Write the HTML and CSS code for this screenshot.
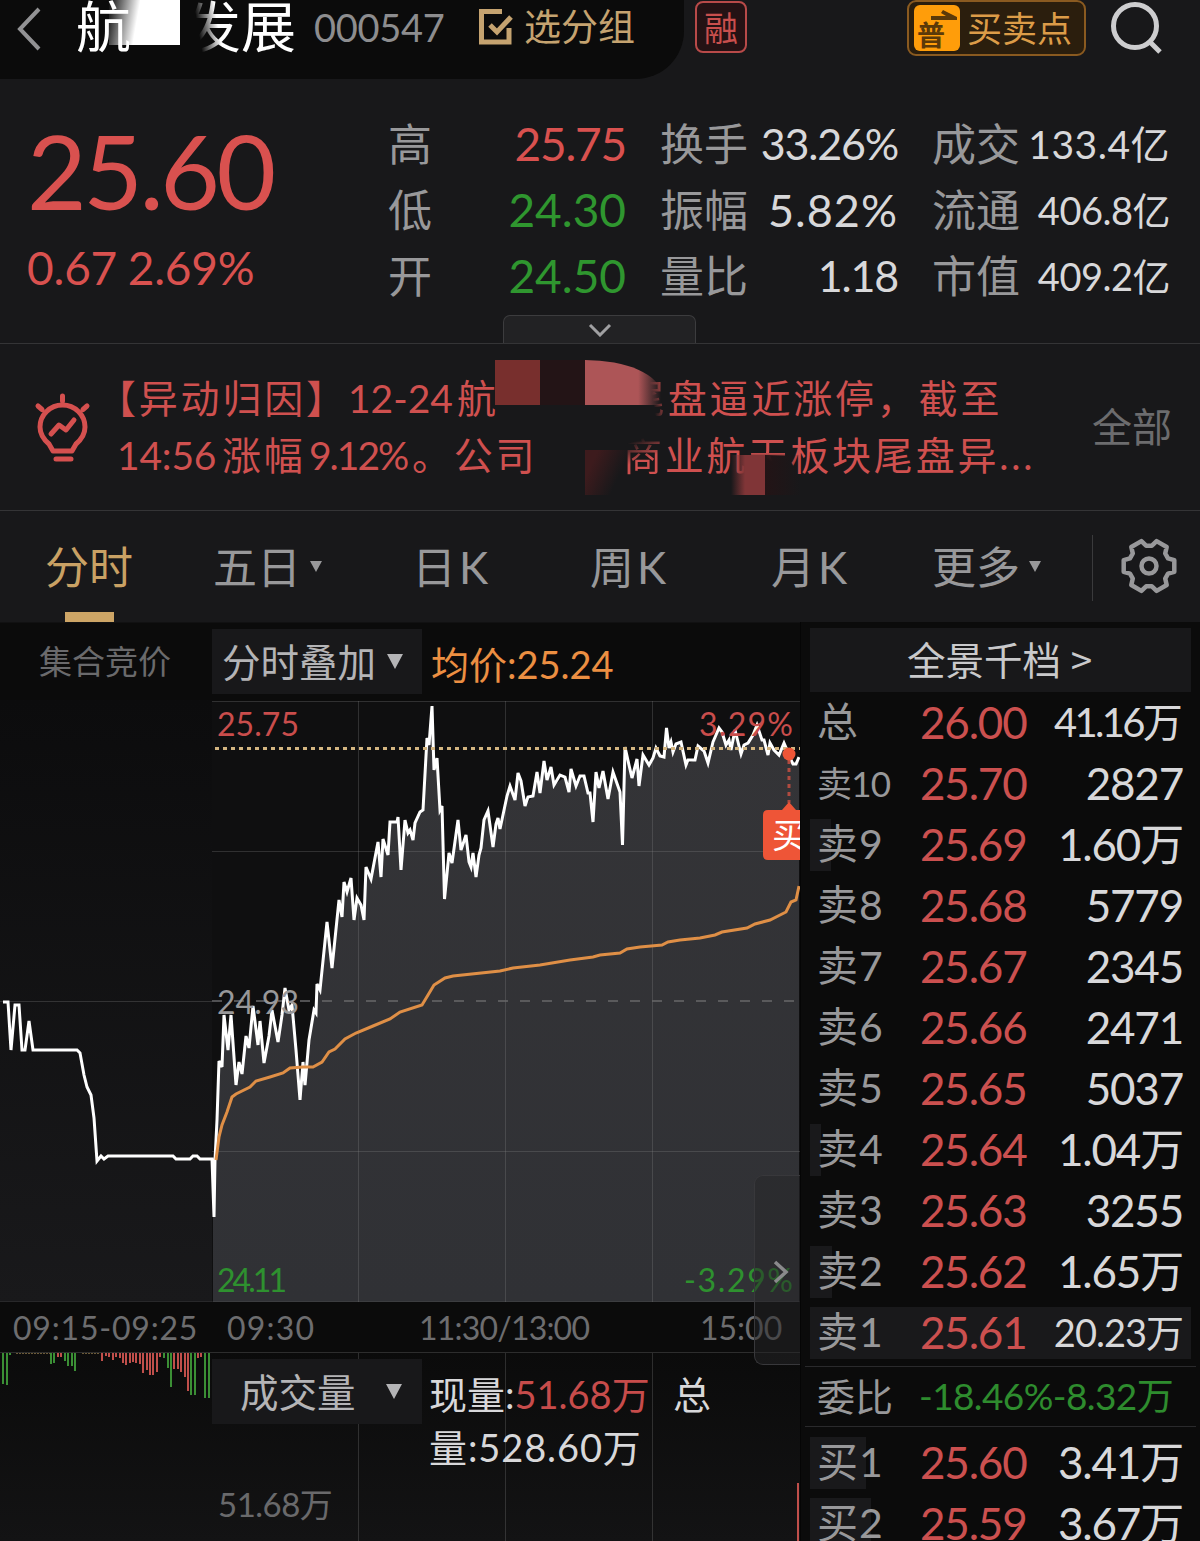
FILE: index.html
```html
<!DOCTYPE html>
<html lang="zh-CN">
<head>
    <meta charset="UTF-8">
    <meta name="viewport" content="width=device-width, initial-scale=1.0">
    <title>000547 分时</title>
    <link rel="stylesheet" href="styles.css">
</head>
<body>
    <header class="header">
        <div class="stock">
            <svg class="back" width="26" height="46" viewBox="0 0 26 46"><path d="M23 3L4 23L23 43"/></svg>
            <h1 class="stock-name">航<span class="name-mask"></span><span class="name-fade">发</span>展</h1>
            <span class="stock-code">000547</span>
            <svg class="check" width="36" height="38" viewBox="0 0 36 38"><path d="M24 3.500H3.500V34H31V20M12 17L19 24L33 9"/></svg>
            <span class="group">选分组</span>
        </div>
        <span class="margin-tag">融</span>
        <div class="trade-point">
            <span class="trade-icon">
                <svg width="46" height="18" viewBox="0 0 46 18"><path d="M17 11H32L27 8L29 5L43 12V15H17Z"/></svg>
                普
            </span>
            买卖点
        </div>
        <svg class="search" width="54" height="54" viewBox="0 0 54 54"><circle cx="25" cy="25" r="21.500"/><path d="M39 40L50 51"/></svg>
    </header>

    <section class="quote">
        <div class="price">
            <div class="price-now">25.60</div>
            <div class="price-change">0.67 2.69%</div>
        </div>
        <dl class="stats stats-price">
            <dt>高</dt><dd class="red">25.75</dd>
            <dt>低</dt><dd class="green">24.30</dd>
            <dt>开</dt><dd class="green">24.50</dd>
        </dl>
        <dl class="stats stats-rate">
            <dt>换手</dt><dd>33.26%</dd>
            <dt>振幅</dt><dd class="wide">5.82%</dd>
            <dt>量比</dt><dd>1.18</dd>
        </dl>
        <dl class="stats stats-total">
            <dt>成交</dt><dd class="wide">133.4亿</dd>
            <dt>流通</dt><dd>406.8亿</dd>
            <dt>市值</dt><dd>409.2亿</dd>
        </dl>
        <div class="expand">
            <svg width="24" height="14" viewBox="0 0 24 14"><path d="M2 2L12 12L22 2"/></svg>
        </div>
    </section>

    <section class="news">
        <svg class="bulb" width="58" height="70" viewBox="0 0 58 70">
            <path d="M28.500 3V8M4 13L8 16.500M53 13L49 16.500M19 58L15 51C8 45 6 39 6 34A22.500 22 0 0 1 51 34C51 39 49 45 42 51L38 58ZM17 41L25 32L32 37L40 27M22 66H37"/>
        </svg>
        <div class="news-text">
            <p><span class="seg seg-tag">【异动归因】</span><span class="seg seg-date">12-24</span><span class="seg seg-head">航</span><span class="fade-left">尾</span><span>盘逼近涨停，截至</span></p>
            <p><span class="seg seg-time">14:56</span><span class="seg seg-rise">涨幅</span><span class="seg seg-pct">9.12%</span><span class="seg seg-corp">。公司</span><span class="fade-corner">商</span><span>业航</span><span class="fade-down">天</span><span>板块尾盘异...</span></p>
            <i class="smudge smudge-a"></i>
            <i class="smudge smudge-b"></i>
            <i class="smudge smudge-c"></i>
            <i class="smudge smudge-d"></i>
            <i class="smudge smudge-e"></i>
        </div>
        <a class="news-all">全部</a>
    </section>

    <nav class="tabs">
        <span class="tab active">分时</span>
        <span class="tab tab-five">五日<i class="caret"></i></span>
        <span class="tab tab-day">日K</span>
        <span class="tab tab-week">周K</span>
        <span class="tab tab-month">月K</span>
        <span class="tab tab-more">更多<i class="caret"></i></span>
        <span class="settings">
            <svg width="56" height="56" viewBox="0 0 56 56">
                <path d="M30.900 7.700L35.600 3.100L45.700 9L44.200 15.400L47 20.300L53.300 22.200V33.800L47 35.700L44.200 40.600L45.700 47L35.600 52.900L30.900 48.300H25.100L20.400 52.900L10.300 47L11.800 40.600L9 35.700L2.700 33.800V22.200L9 20.300L11.800 15.400L10.300 9L20.400 3.100L25.100 7.700Z"/>
                <circle cx="28" cy="28" r="7.500"/>
            </svg>
        </span>
    </nav>

    <main class="board">
        <div class="charts">
            <div class="chart-bar">
                <span class="auction">集合竞价</span>
                <span class="select">分时叠加<i class="caret big"></i></span>
                <span class="average">均价:25.24</span>
            </div>

            <svg class="trend" width="800" height="602" viewBox="0 700 800 602">
                <defs>
                    <linearGradient id="auctionBg" x1="0" y1="0" x2="0" y2="1">
                        <stop offset="0" stop-color="#0c0c0d"/>
                        <stop offset="1" stop-color="#19191b"/>
                    </linearGradient>
                    <linearGradient id="trendFill" x1="0" y1="0" x2="0" y2="1">
                        <stop offset="0" stop-color="#343437"/>
                        <stop offset="1" stop-color="#303135"/>
                    </linearGradient>
                </defs>
                <rect x="0" y="700" width="212" height="602" fill="url(#auctionBg)"/>
                <rect x="212" y="701" width="588" height="601" fill="#0f0f10"/>
                <path fill="url(#trendFill)" d="M213 1302V1160L214 1217L215 1160L217 1120L219 1061L222 1067L224 1015L228 1050L231 1015L236 1085L239 1062L242 1074L246 1036L249 1048L253 1006L258 1045L260 1021L264 1063L269 1036L272 1010L278 1042L282 1015L285 988L289 1010L292 1005L296 1050L300 1100L303 1062L305 1085L309 1040L314 1010L317 984L320 990L327 922L332 968L339 900L342 917L344 882L347 892L351 878L354 920L357 898L361 905L364 920L366 867L371 879L378 842L381 877L383 839L388 855L390 822L397 822L398 817L401 870L405 820L408 833L413 840L415 823L420 812L423 810L427 738L429 745L432 706L434 770L437 758L440 810L442 806L444 899L449 853L452 863L458 820L461 850L466 835L469 862L473 853L476 877L481 848L484 820L488 811L493 847L498 818L500 829L507 796L510 786L515 800L518 773L525 806L533 796L537 772L540 793L544 761L547 780L551 767L554 785L565 777L569 792L571 769L576 786L584 776L588 793L590 793L593 822L596 772L599 788L603 771L608 799L613 772L620 792L622 845L625 747L632 778L637 759L639 786L643 755L649 765L656 748L664 757L666 728L669 748L673 752L681 742L686 765L695 760L698 746L704 751L708 763L719 728L726 745L731 750L735 730L741 754L757 725L768 755L770 743L779 755L784 743L793 764L799 757V1302Z"/>
                <path class="grid" d="M212 701.500H800M358.500 701V1302M505.500 701V1302M652.500 701V1302M212 851.500H800M212 1151.500H800M0 1001.500H212M0 1302H800"/>
                <path class="middle" d="M212 1001H796"/>
                <path class="line" d="M3 1002H8L11 1050L15 1005H19L22 1050H25L29 1021L33 1050H77L80 1053L84 1075L87 1087L91 1095L94 1118L97 1161L101 1156L104 1159L108 1156H173L176 1159H190L193 1156H197L200 1159H212L214 1217L215 1160L217 1120L219 1061L222 1067L224 1015L228 1050L231 1015L236 1085L239 1062L242 1074L246 1036L249 1048L253 1006L258 1045L260 1021L264 1063L269 1036L272 1010L278 1042L282 1015L285 988L289 1010L292 1005L296 1050L300 1100L303 1062L305 1085L309 1040L314 1010L316 1013L317 984L320 990L327 922L332 968L339 900L342 917L344 882L347 892L351 878L354 920L357 898L361 905L364 920L366 867L371 879L378 842L381 877L383 839L388 855L390 822L397 822L398 817L401 870L405 820L408 833L410 830L413 840L415 823L420 812L423 810L427 738L429 745L432 706L434 770L437 758L440 810L442 806L444.500 899L449 853L452 863L458 820L461 850L466 835L469 862L471 867L473 853L476 877L479 855L481 848L484 820L488 811L493 847L496 824L498 818L500 829L507 796L510 786L515 800L518 773L521 781L525 806L528 797L533 796L537 772L540 793L544 761L547 780L551 767L554 785L560 775L565 777L569 792L571 769L576 786L580 776L584 776L588 793L590 793L593 822L596 772L599 788L603 771L608 799L613 772L620 792L622.500 845L625 747L629 765L632 778L637 759L639 786L643 755L649 765L653 758L656 748L660 756L664 757L666.500 728L669 748L671 742L673 752L676 744L681 742L686 765L688 760L695 760L698 746L704 751L708 763L713 742L716 735L719 728L722 732L726 745L729 740L731 750L735 730L741 754L744 745L748 743L753 735L757 725L762 740L764 740L768 755L770 743L774 750L779 755L784 743L787 750L789 756L793 764L796 764L799 757"/>
                <path class="avg" d="M216 1160L219 1137L222 1125L227 1112L232 1097L236 1094L250 1087L256 1081L270 1077L283 1073L290 1068L303 1067H313L322 1062L329 1052L335 1049L345 1039L356 1033L373 1026L390 1019L400 1012L422 1005L434 985L445 978L453 976L500 971L513 968L540 965L570 960L593 957L600 955L620 953L627 949L640 947L662 945L668 942L680 940L700 938L715 935L722 932L747 928L755 924L770 920L786 912L791 902L796 900L799 886"/>
                <text class="mark red-mark" x="217" y="736" textLength="82">25.75</text>
                <text class="mark grey-mark" x="217" y="1014" textLength="82">24.93</text>
                <text class="mark green-mark" x="217" y="1292" textLength="70">24.11</text>
                <text class="mark green-mark" x="684" y="1292" textLength="109">-3.29%</text>
                <text class="mark red-mark" x="699" y="736" textLength="94">3.29%</text>
                <path class="current" d="M215 748.500H800"/>
                <path class="stem" d="M789 760V803"/>
                <circle cx="789" cy="754" r="6.500" fill="#ee5537"/>
                <path d="M763 815Q763 810 768 810H782L789 802L796 810H800V860H768Q763 860 763 855Z" fill="#ee5537"/>
                <text x="772" y="848" class="buy">买</text>
            </svg>

            <div class="axis">
                <span class="axis-auction">09:15-09:25</span>
                <span class="axis-open">09:30</span>
                <span class="axis-noon">11:30/13:00</span>
                <span class="axis-close">15:00</span>
            </div>

            <div class="volume">
                <svg class="volume-bars" width="800" height="189" viewBox="0 1352 800 189">
                    <path class="grid" d="M0 1352.500H800M358.500 1353V1541M505.500 1353V1541M652.500 1353V1541"/>
                    <path class="bars green-bars" d="M3 1353V1384M7 1353V1385M10 1353V1355M51 1353V1364M54 1353V1363M65 1353V1361M68 1353V1366M72 1353V1366M75 1353V1371M164 1353V1358M168 1353V1368M171 1353V1387M191 1353V1395M195 1353V1395M205 1353V1398M209 1353V1398"/>
                    <path class="bars red-bars" d="M58 1353V1357M61 1353V1357M102 1353V1361M106 1353V1356M109 1353V1357M113 1353V1360M116 1353V1357M120 1353V1358M123 1353V1363M126 1353V1365M130 1353V1363M133 1353V1362M136 1353V1363M140 1353V1364M143 1353V1373M147 1353V1370M150 1353V1375M153 1353V1375M157 1353V1372M160 1353V1357M174 1353V1369M178 1353V1369M181 1353V1372M185 1353V1377M188 1353V1391M198 1353V1358M201 1353V1357M798 1483V1541"/>
                    <path class="ticks" d="M16 1353.500H50M82 1353.500H100"/>
                </svg>
                <div class="volume-info">
                    <span class="select volume-select">成交量<i class="caret big"></i></span>
                    <p class="volume-text"><span class="now">现量:<b>51.68万</b></span>总<br><span class="sum">量:528.60万</span></p>
                    <span class="volume-max">51.68万</span>
                </div>
            </div>

            <div class="drawer">
                <svg width="16" height="24" viewBox="0 0 16 24"><path d="M2 2L13 12L2 22"/></svg>
            </div>
        </div>

        <aside class="orders">
            <div class="orders-title">全景千档 <span>&gt;</span></div>
            <div class="order total"><span>总</span><b>26.00</b><em>41.16万</em></div>
            <div class="order ten"><span>卖10</span><b>25.70</b><em>2827</em></div>
            <div class="order" style="--depth: 21px"><span>卖9</span><b>25.69</b><em>1.60万</em></div>
            <div class="order"><span>卖8</span><b>25.68</b><em>5779</em></div>
            <div class="order"><span>卖7</span><b>25.67</b><em>2345</em></div>
            <div class="order"><span>卖6</span><b>25.66</b><em>2471</em></div>
            <div class="order"><span>卖5</span><b>25.65</b><em>5037</em></div>
            <div class="order" style="--depth: 11px"><span>卖4</span><b>25.64</b><em>1.04万</em></div>
            <div class="order"><span>卖3</span><b>25.63</b><em>3255</em></div>
            <div class="order" style="--depth: 22px"><span>卖2</span><b>25.62</b><em>1.65万</em></div>
            <div class="order long" style="--depth: 382px"><span>卖1</span><b>25.61</b><em>20.23万</em></div>
            <div class="ratio"><span>委比</span><b>-18.46%-8.32万</b></div>
            <div class="order" style="--depth: 56px"><span>买1</span><b>25.60</b><em>3.41万</em></div>
            <div class="order" style="--depth: 61px"><span>买2</span><b>25.59</b><em>3.67万</em></div>
        </aside>
    </main>
</body>
</html>
```
FILE: styles.css
```css
* {
    box-sizing: border-box;
}

body {
    margin: 0;
    width: 1200px;
    height: 1541px;
    overflow: hidden;
    background-color: #18181a;
    color: #d8d8da;
    font-family: Lato, "Noto Sans CJK SC", sans-serif;
}

h1, p, dl, dd {
    margin: 0;
}

b, em, i {
    font-weight: normal;
    font-style: normal;
}

svg {
    display: block;
    fill: none;
    flex: none;
}

.red {
    color: #d9514f;
}

.green {
    color: #2f962f;
}

/* header */

.header {
    display: flex;
    height: 79px;
}

.stock {
    display: flex;
    width: 684px;
    height: 79px;
    padding-left: 16px;
    background-color: #0b0b0b;
    border-radius: 0 0 48px 0;
    white-space: nowrap;
}

.back {
    margin-top: 6px;
    stroke: #929294;
    stroke-width: 4;
}

.stock-name {
    display: flex;
    width: 238px;
    margin-left: 34px;
    color: #fff;
    font-size: 55px;
    font-weight: normal;
    line-height: 52px;
}

.name-mask {
    position: relative;
    width: 55px;
}

.name-mask::before {
    content: "";
    position: absolute;
    left: -22px;
    top: 0;
    width: 71px;
    height: 45px;
    background: linear-gradient(100deg, transparent, #fff 40%);
}

.name-fade {
    background: linear-gradient(80deg, transparent 30%, #fff 60%);
    -webkit-background-clip: text;
    background-clip: text;
    color: transparent;
}

.stock-code {
    width: 164px;
    color: #8d8d8f;
    font-size: 38px;
    line-height: 54px;
    letter-spacing: -0.3px;
}

.check {
    margin-top: 8px;
    stroke: #c5a370;
    stroke-width: 5;
}

.group {
    margin-left: 10px;
    color: #c5a370;
    font-size: 37px;
    line-height: 54px;
}

.margin-tag {
    width: 52px;
    height: 52px;
    margin: 1px 0 0 11px;
    border: 2px solid #b84a49;
    border-radius: 8px;
    background-color: #241214;
    color: #c94f4d;
    font-size: 34px;
    line-height: 49px;
    text-align: center;
}

.trade-point {
    display: flex;
    width: 179px;
    height: 56px;
    margin-left: 160px;
    padding: 3px 0 0 5px;
    border: 2px solid #8a5a20;
    border-radius: 9px;
    background-color: #2b1e0d;
    color: #dc9c48;
    font-size: 35px;
    line-height: 46px;
    white-space: nowrap;
}

.trade-icon {
    width: 46px;
    height: 46px;
    margin-right: 7px;
    border-radius: 6px;
    background-color: #ff9d0a;
    color: #5b3909;
    font-size: 28px;
    font-weight: bold;
    line-height: 24px;
    padding-left: 3px;
}

.trade-icon svg {
    margin-left: -3px;
    fill: #5b3909;
}

.search {
    margin: 1px 0 0 24px;
    stroke: #cdcdcf;
    stroke-width: 5;
}

/* quote */

.quote {
    position: relative;
    display: flex;
    height: 265px;
    padding: 32px 0 0 27px;
    border-bottom: 1px solid #343436;
}

.price {
    width: 361px;
    color: #d9514f;
    white-space: nowrap;
}

.price-now {
    height: 124px;
    font-size: 103px;
    line-height: 118px;
    letter-spacing: -3.5px;
}

.price-change {
    font-size: 46px;
    line-height: 66px;
    letter-spacing: -0.2px;
    word-spacing: -1px;
}

.stats {
    display: grid;
    grid-template-columns: auto 1fr;
    grid-auto-rows: 66px;
    line-height: 66px;
    font-size: 46px;
    white-space: nowrap;
}

.stats dt {
    color: #98989a;
    font-size: 44px;
}

.stats dd {
    text-align: right;
    letter-spacing: -1.2px;
}

.stats-price {
    width: 238px;
}

.stats-price .green {
    letter-spacing: 0;
}

.stats-rate {
    width: 238px;
    margin-left: 34px;
}

.stats-rate dd {
    font-size: 43px;
    letter-spacing: -1.2px;
}

.stats-rate .wide {
    font-size: 45px;
    letter-spacing: 1px;
}

.stats-total {
    width: 238px;
    margin-left: 34px;
}

.stats-total dd {
    font-size: 38px;
    letter-spacing: -0.5px;
}

.stats-total .wide {
    font-size: 39px;
    letter-spacing: 0.5px;
}

.expand {
    position: absolute;
    left: 503px;
    bottom: 0;
    display: flex;
    justify-content: center;
    width: 193px;
    height: 28px;
    padding-top: 7px;
    border: 1px solid #3c3c3e;
    border-bottom: 0;
    border-radius: 7px 7px 0 0;
    background-color: #222224;
}

.expand svg {
    stroke: #a0a0a2;
    stroke-width: 3;
}

/* news */

.news {
    display: flex;
    height: 167px;
    padding-left: 34px;
    border-bottom: 1px solid #343436;
    color: #cf504f;
}

.bulb {
    margin: 49px -2px 0 0;
    stroke: #d5504f;
    stroke-width: 5;
    stroke-linecap: round;
    stroke-linejoin: round;
}

.news-text {
    position: relative;
    width: 1000px;
    padding-top: 26px;
    font-size: 39px;
    letter-spacing: 2.8px;
    line-height: 57px;
    white-space: nowrap;
}

.news-text p {
    display: flex;
}

.seg {
    flex: none;
}

.seg-tag {
    width: 251px;
    padding-left: 7px;
}

.seg-date {
    width: 109px;
    margin-left: 7px;
    letter-spacing: 0;
}

.seg-head {
    width: 169px;
}

.seg-time {
    width: 105px;
    margin-left: 27px;
    letter-spacing: -0.2px;
}

.seg-rise {
    width: 87px;
}

.seg-pct {
    width: 103px;
    letter-spacing: -2px;
}

.seg-corp {
    width: 211px;
}

.fade-left,
.fade-corner,
.fade-down {
    background: linear-gradient(80deg, transparent 60%, #cf504f 90%);
    -webkit-background-clip: text;
    background-clip: text;
    color: transparent;
}

.fade-corner {
    background-image: linear-gradient(160deg, transparent 25%, #cf504f 55%);
}

.fade-down {
    background-image: linear-gradient(#cf504f 45%, transparent 60%);
}

.smudge {
    position: absolute;
}

.smudge-a {
    left: 405px;
    top: 16px;
    width: 45px;
    height: 45px;
    background-color: #782f2d;
}

.smudge-b {
    left: 450px;
    top: 16px;
    width: 45px;
    height: 45px;
    background-color: #231416;
}

.smudge-c {
    left: 495px;
    top: 16px;
    width: 76px;
    height: 45px;
    background: linear-gradient(90deg, #ad5557 70%, #ad555700);
    border-radius: 0 76px 0 0 / 0 34px 0 0;
}

.smudge-d {
    left: 495px;
    top: 106px;
    width: 45px;
    height: 45px;
    background: linear-gradient(115deg, #3d1b1d 20%, #18181a00 70%);
}

.smudge-e {
    left: 641px;
    top: 111px;
    width: 70px;
    height: 40px;
    background: linear-gradient(90deg, transparent, #803537 20%, #803537 34px, #231416 34px, transparent);
}

.news-all {
    margin: 55px 0 0 2px;
    color: #6c6c6e;
    font-size: 40px;
    line-height: 56px;
}

/* tabs */

.tabs {
    display: flex;
    height: 111px;
    padding-left: 45px;
    color: #98989a;
    font-size: 44px;
    line-height: 112px;
    white-space: nowrap;
}

.tab {
    position: relative;
    display: flex;
    align-items: center;
    width: 168px;
}

.tab.active {
    color: #c9a164;
}

.tab.active::after {
    content: "";
    position: absolute;
    left: 20px;
    bottom: 0;
    width: 49px;
    height: 10px;
    background-color: #cda566;
}

.tab-five {
    width: 199px;
}

.tab-day,
.tab-week,
.tab-month {
    width: 178px;
    letter-spacing: 3px;
}

.tab-week {
    width: 181px;
}

.tab-month {
    width: 161px;
}

.caret {
    margin-left: 9px;
    border: 6px solid transparent;
    border-top: 11px solid #98989a;
    border-bottom: 0;
}

.caret.big {
    margin-left: 11px;
    border-width: 15px 8px 0;
    border-top-color: #b4b4b6;
}

.settings {
    width: 108px;
    height: 66px;
    margin: 24px 0 0 -8px;
    padding: 3px 0 0 28px;
    border-left: 1px solid #3a3a3c;
}

.settings svg {
    stroke: #98989a;
    stroke-width: 4.5;
    stroke-linejoin: round;
}

/* board */

.board {
    display: flex;
    height: 919px;
    background-color: #0b0b0b;
}

.charts {
    position: relative;
    width: 800px;
    border-top: 1px solid #111112;
}

.chart-bar {
    display: flex;
    height: 77px;
    padding-top: 6px;
    line-height: 64px;
    white-space: nowrap;
}

.auction {
    width: 212px;
    padding-left: 39px;
    color: #6a6a6c;
    font-size: 33px;
}

.select {
    display: flex;
    align-items: center;
    width: 210px;
    height: 65px;
    padding-left: 10px;
    background-color: #18181a;
    color: #b4b4b6;
    font-size: 38.5px;
}

.average {
    margin-left: 9px;
    color: #ec8f42;
    font-size: 38px;
    line-height: 70px;
}

.grid {
    stroke: #88888a;
    stroke-opacity: 0.28;
}

.middle {
    stroke: #68686a;
    stroke-width: 1.5;
    stroke-dasharray: 10 12;
}

.line {
    stroke: #fff;
    stroke-width: 3;
}

.avg {
    stroke: #df8f46;
    stroke-width: 3;
}

.current {
    stroke: #d3b580;
    stroke-width: 3;
    stroke-dasharray: 4 4;
}

.stem {
    stroke: #b04b40;
    stroke-width: 3;
    stroke-dasharray: 4 4;
}

.mark {
    font-size: 32px;
}

.red-mark {
    fill: #c94d4c;
}

.grey-mark {
    fill: #98989a;
}

.green-mark {
    fill: #2e912f;
}

.buy {
    fill: #fff;
    font-size: 34px;
}

.axis {
    display: flex;
    height: 50px;
    color: #6d6d6f;
    font-size: 32px;
    line-height: 52px;
    white-space: nowrap;
}

.axis-auction {
    width: 227px;
    padding-left: 13px;
    letter-spacing: 0.8px;
}

.axis-open {
    width: 192px;
    letter-spacing: 1.2px;
}

.axis-noon {
    width: 281px;
    letter-spacing: -0.8px;
}

.volume {
    display: grid;
    height: 189px;
    background: linear-gradient(#0b0b0b, #131314);
}

.volume-bars,
.volume-info {
    grid-area: 1 / 1;
}

.bars {
    stroke-width: 2;
}

.green-bars {
    stroke: #3b8f35;
}

.red-bars {
    stroke: #c04f4b;
}

.ticks {
    stroke: #6b5a38;
    stroke-dasharray: 2 1;
}

.volume-info {
    display: grid;
    grid-template-columns: 210px 1fr;
    grid-template-rows: 115px 74px;
    padding-left: 212px;
    white-space: nowrap;
}

.volume-select {
    margin-top: 7px;
    padding-left: 28px;
    line-height: 62px;
}

.volume-select .caret {
    margin-left: 30px;
}

.volume-text {
    padding: 16px 0 0 7px;
    font-size: 38px;
    line-height: 53px;
}

.volume-text b {
    color: #c74c4b;
}

.now {
    display: inline-block;
    width: 244px;
}

.sum {
    letter-spacing: 0.9px;
}

.volume-max {
    padding-left: 6px;
    color: #69696b;
    font-size: 33px;
    line-height: 74px;
    letter-spacing: -0.5px;
}

.drawer {
    position: absolute;
    left: 754px;
    top: 552px;
    width: 46px;
    height: 190px;
    padding: 84px 0 0 18px;
    border: 1px solid #38383b;
    border-right: 0;
    border-radius: 9px 0 0 9px;
    background-color: rgba(38, 38, 39, 0.5);
}

.drawer svg {
    stroke: #8a8a8c;
    stroke-width: 3.5;
}

/* order book */

.orders {
    width: 400px;
    padding: 6px 9px 0;
    border-left: 1px solid #050505;
}

.orders-title {
    height: 64px;
    padding-right: 2px;
    background-color: #18181a;
    color: #c9c9cb;
    font-size: 38.5px;
    line-height: 61px;
    text-align: center;
}

.orders-title span {
    font-family: "Noto Sans CJK SC", sans-serif;
}

.order {
    display: grid;
    grid-template-columns: 102px 118px 1fr;
    height: 61px;
    padding: 0 8px 0 7px;
    background: linear-gradient(#19191b, #19191b) 0 50% / var(--depth, 0) 52px no-repeat;
    font-size: 44px;
    line-height: 60px;
    letter-spacing: -1.2px;
    white-space: nowrap;
}

.order span {
    color: #98989a;
    font-size: 41px;
    letter-spacing: 1px;
}

.order.ten span {
    font-size: 35px;
    letter-spacing: -0.8px;
}

.order b {
    padding-left: 1px;
    color: #cb504f;
}

.order em {
    text-align: right;
}

.order.total em {
    font-size: 40px;
    letter-spacing: -2.7px;
    padding-right: 3px;
}

.order.long em {
    font-size: 38px;
    letter-spacing: -1px;
}

.ratio {
    display: grid;
    grid-template-columns: 102px 1fr;
    height: 61px;
    margin: 3px -5px 5px;
    padding-left: 12px;
    border-top: 1px solid #2a2a2c;
    border-bottom: 1px solid #2a2a2c;
    font-size: 38px;
    line-height: 58px;
    white-space: nowrap;
}

.ratio b {
    color: #2e8c2e;
    font-size: 37px;
    letter-spacing: -0.6px;
}

.ratio span {
    color: #98989a;
}
```
